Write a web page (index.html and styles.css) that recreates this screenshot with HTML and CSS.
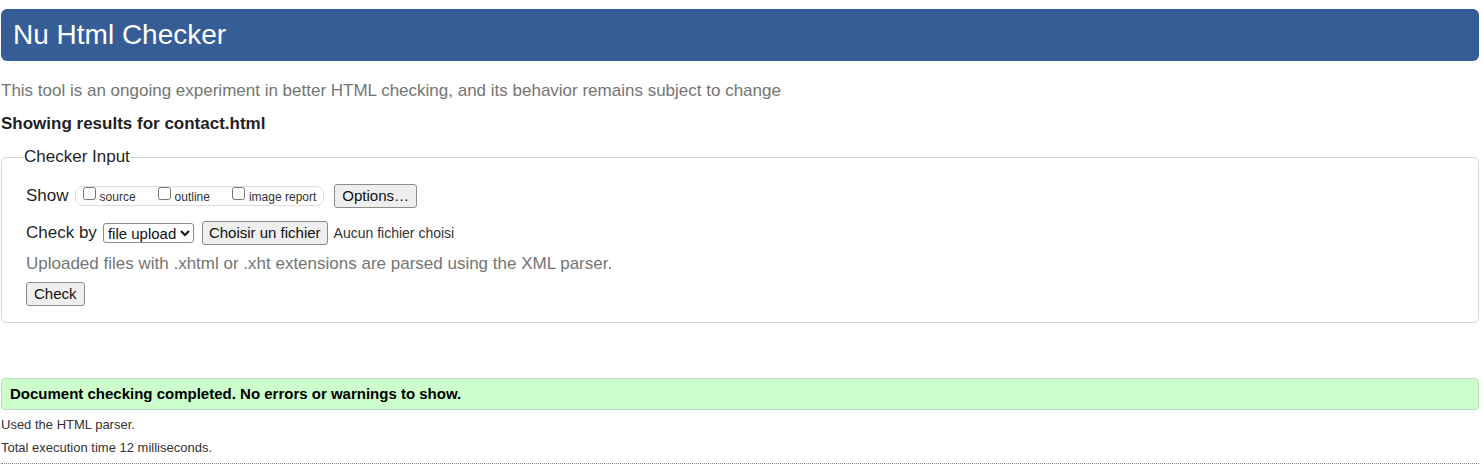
FILE: index.html
```html
<!DOCTYPE html>
<html lang="en">
<head>
<meta charset="utf-8">
<title>Nu Html Checker</title>
<link rel="stylesheet" href="styles.css">
</head>
<body>
<header>
  <h1 class="banner">Nu Html Checker</h1>
  <p class="tagline">This tool is an ongoing experiment in better HTML checking, and its behavior remains subject to change</p>
</header>
<main>
  <h2 class="results-title">Showing results for contact.html</h2>
  <form>
    <fieldset class="checker">
      <legend>Checker Input</legend>
      <div class="row show-row">
        <span>Show</span>
        <div class="checkboxes">
          <label><input type="checkbox"><span>source</span></label>
          <label><input type="checkbox"><span>outline</span></label>
          <label><input type="checkbox"><span>image report</span></label>
        </div>
        <button class="button options" type="button">Options…</button>
      </div>
      <div class="row method-row">
        <label for="method">Check by</label>
        <select id="method"><option>file upload</option><option>address</option><option>text input</option></select>
        <div class="file">
          <input class="file-input" id="file" type="file" tabindex="-1" aria-labelledby="choose">
          <button class="button" id="choose" type="button" onclick="document.getElementById('file').click()">Choisir un fichier</button>
          <span>Aucun fichier choisi</span>
        </div>
      </div>
      <p class="hint">Uploaded files with .xhtml or .xht extensions are parsed using the XML parser.</p>
      <button class="button" type="button">Check</button>
    </fieldset>
  </form>
  <p class="success">Document checking completed. No errors or warnings to show.</p>
  <p class="detail">Used the HTML parser.</p>
  <p class="detail">Total execution time 12 milliseconds.</p>
</main>
<hr>
</body>
</html>
```
FILE: styles.css
```css
* {
  box-sizing: border-box;
}
body {
  margin: 9px 4px 0 1px;
  background: #fff;
  color: #1f1f1f;
  font: 17px/20px "Liberation Sans", Arial, sans-serif;
}
h1, h2, p {
  margin: 0;
}
.banner {
  padding: 10px 12px;
  border-radius: 6px;
  background: #365d95;
  color: #fff;
  font-size: 28px;
  font-weight: normal;
  line-height: 32px;
}
.tagline {
  margin-top: 20px;
  color: #757575;
}
.results-title {
  margin: 13px 0;
  font-size: 17px;
  line-height: 20px;
}
.checker {
  margin: 0;
  padding: 17px 24px 16px;
  border: 1px solid #d5d5d5;
  border-radius: 5px;
}
.checker legend {
  margin-left: -2px;
  padding: 0;
}
.row {
  display: flex;
  align-items: center;
}
.show-row {
  gap: 6px;
}
.checkboxes {
  display: flex;
  gap: 22px;
  height: 20px;
  padding: 0 7px;
  border: 1px solid #ddd;
  border-radius: 8px;
  color: #333;
  font-size: 12px;
}
.checkboxes label {
  display: flex;
  gap: 4px;
}
.checkboxes input {
  width: 13px;
  height: 13px;
  margin: 0;
}
.button {
  height: 24px;
  padding: 0 8px;
  border: 1px solid #8c8c8c;
  border-radius: 3px;
  background: #efefef;
  color: #111;
  font: 14px/20px "Liberation Sans", Arial, sans-serif;
}
.options {
  margin-left: 4px;
}
.method-row {
  gap: 6px;
  margin-top: 13px;
}
.method-row select {
  height: 20px;
  border: 1px solid #8c8c8c;
  border-radius: 3px;
  background: #fff;
  color: #111;
  font: 15px "Liberation Sans", Arial, sans-serif;
}
.file {
  position: relative;
  display: flex;
  align-items: center;
  gap: 6px;
  margin-left: 2px;
  color: #333;
  font-size: 14px;
}
.file .button {
  font-size: 15px;
  padding: 0 6px;
}
.file-input {
  position: absolute;
  width: 1px;
  height: 1px;
  opacity: 0;
}
.hint {
  margin: 9px 0 8px;
  color: #757575;
}
.button {
  font-size: 15px;
  padding: 0 7px;
}
.success {
  margin: 55px 0 6px;
  padding: 6px 8px;
  border: 1px solid #c0dcc0;
  border-radius: 4px;
  background: #cfc;
  color: #000;
  font-size: 15px;
  font-weight: bold;
  line-height: 18px;
}
.detail {
  margin-bottom: 5px;
  color: #333;
  font-size: 13px;
  line-height: 18px;
}
hr {
  margin: 6px 0 0;
  border: 0;
  border-top: 1px dotted #888;
}
```
